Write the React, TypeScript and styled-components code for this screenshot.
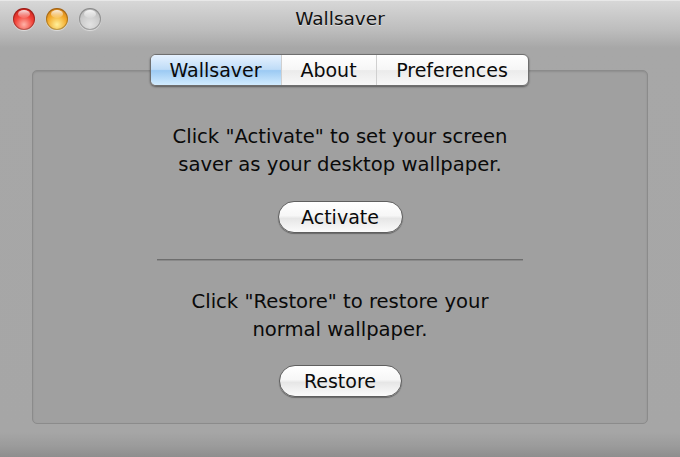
import React from "react";
import styled, { createGlobalStyle } from "styled-components";

const GlobalStyle = createGlobalStyle`
	html, body {
		margin: 0;
		padding: 0;
		background: #a6a6a6;
	}
	* {
		box-sizing: border-box;
	}
`;

const Window = styled.div`
	width: 680px;
	height: 457px;
	display: flex;
	flex-direction: column;
	font-family: "DejaVu Sans", "Liberation Sans", sans-serif;
	color: #111;
	background: linear-gradient(
		to bottom,
		#d8d8d8 0px,
		#bdbdbd 30px,
		#a7a7a7 48px,
		#a6a6a6 432px,
		#9b9b9b 446px,
		#8e8e8e 457px
	);
	overflow: hidden;
`;

const TitleBar = styled.div`
	height: 36px;
	display: grid;
	grid-template-columns: 120px 1fr 120px;
	align-items: center;
	border-top: 1px solid #e8e8e8;
`;

const Lights = styled.div`
	display: flex;
	gap: 11px;
	padding-left: 13px;
	padding-top: 1px;
`;

const Light = styled.div<{ $kind: "close" | "min" | "zoom" }>`
	width: 22px;
	height: 22px;
	border-radius: 50%;
	box-shadow: 0 1px 1px rgba(255, 255, 255, 0.5), inset 0 0 0 1px rgba(0, 0, 0, 0.25);
	background: ${(p) =>
		p.$kind === "close"
			? "radial-gradient(circle at 50% 75%, #ffb3a8 0%, #f2443a 45%, #b8100c 100%)"
			: p.$kind === "min"
			? "radial-gradient(circle at 50% 75%, #fff09a 0%, #f3a92a 50%, #c0650a 100%)"
			: "radial-gradient(circle at 50% 75%, #e2e2e2 0%, #cbcbcb 50%, #a9a9a9 100%)"};
	position: relative;
	&::after {
		content: "";
		position: absolute;
		left: 5px;
		top: 2px;
		width: 12px;
		height: 8px;
		border-radius: 50%;
		background: linear-gradient(to bottom, rgba(255, 255, 255, 0.85), rgba(255, 255, 255, 0.1));
	}
`;

const Title = styled.div`
	text-align: center;
	font-size: 18.5px;
	color: #111;
	text-shadow: 0 1px 0 rgba(255, 255, 255, 0.45);
`;

const Body = styled.div`
	flex: 1;
	padding: 34px 32px 33px;
	display: flex;
`;

const Panel = styled.div`
	flex: 1;
	border: 1px solid #8b8b8b;
	border-radius: 5px;
	background: #a0a0a0;
	box-shadow: inset 0 1px 2px rgba(0, 0, 0, 0.12);
	display: flex;
	flex-direction: column;
	align-items: center;
`;

const Tabs = styled.div`
	display: flex;
	margin-top: -17px;
	margin-left: -2px;
	height: 32px;
	border: 1px solid #6f6f6f;
	border-radius: 6px;
	overflow: hidden;
	box-shadow: 0 1px 2px rgba(0, 0, 0, 0.45);
	background: linear-gradient(to bottom, #ffffff 0%, #f6f6f6 50%, #ebebeb 52%, #f8f8f8 100%);
`;

const Tab = styled.div<{ $active?: boolean; $w: number }>`
	width: ${(p) => p.$w}px;
	display: flex;
	align-items: center;
	justify-content: center;
	font-size: 19px;
	color: #0a0a0a;
	border-left: 1px solid #d0d0d0;
	&:first-child {
		border-left: none;
	}
	background: ${(p) =>
		p.$active
			? "linear-gradient(to bottom, #e6f2ff 0%, #bfdcf7 48%, #9ccaf3 52%, #d2ecff 100%)"
			: "transparent"};
`;

const Message = styled.p<{ $top: number }>`
	margin: ${(p) => p.$top}px 0 0;
	font-size: 19.6px;
	line-height: 28px;
	text-align: center;
	color: #0a0a0a;
`;

const PillButton = styled.button<{ $w: number; $top: number }>`
	margin-top: ${(p) => p.$top}px;
	width: ${(p) => p.$w}px;
	height: 32px;
	border-radius: 16px;
	border: 1px solid #5f5f5f;
	background: linear-gradient(to bottom, #ffffff 0%, #f7f7f7 45%, #e6e6e6 55%, #fbfbfb 100%);
	box-shadow: 0 1px 1px rgba(0, 0, 0, 0.35);
	font-family: inherit;
	font-size: 19px;
	color: #0a0a0a;
	padding: 0;
`;

const Divider = styled.div`
	margin-top: 26px;
	width: 366px;
	height: 2px;
	background: #6e6e6e;
	border-bottom: 1px solid #8a8a8a;
`;

export default function App() {
	return (
		<>
			<GlobalStyle />
			<Window>
				<TitleBar>
					<Lights>
						<Light $kind="close" />
						<Light $kind="min" />
						<Light $kind="zoom" />
					</Lights>
					<Title>Wallsaver</Title>
					<div />
				</TitleBar>
				<Body>
					<Panel>
						<Tabs>
							<Tab $active $w={130}>Wallsaver</Tab>
							<Tab $w={95}>About</Tab>
							<Tab $w={152}>Preferences</Tab>
						</Tabs>
						<Message $top={37}>
							Click "Activate" to set your screen
							<br />
							saver as your desktop wallpaper.
						</Message>
						<PillButton $w={125} $top={22}>Activate</PillButton>
						<Divider />
						<Message $top={27}>
							Click "Restore" to restore your
							<br />
							normal wallpaper.
						</Message>
						<PillButton $w={123} $top={21}>Restore</PillButton>
					</Panel>
				</Body>
			</Window>
		</>
	);
}
